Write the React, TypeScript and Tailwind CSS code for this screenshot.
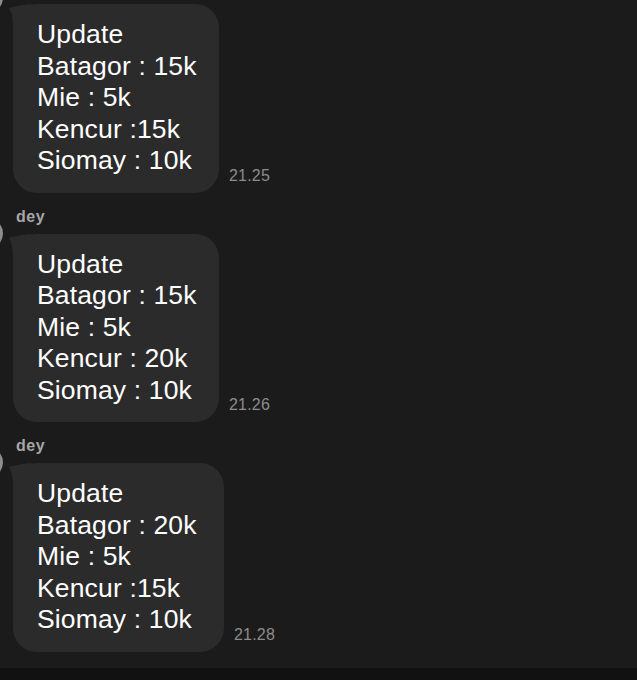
import React from 'react';

interface Message {
  sender?: string;
  lines: string[];
  time: string;
  width: string;
}

const messages: Message[] = [
  {
    lines: ['Update', 'Batagor : 15k', 'Mie : 5k', 'Kencur :15k', 'Siomay : 10k'],
    time: '21.25',
    width: 'w-[206px]',
  },
  {
    sender: 'dey',
    lines: ['Update', 'Batagor : 15k', 'Mie : 5k', 'Kencur : 20k', 'Siomay : 10k'],
    time: '21.26',
    width: 'w-[206px]',
  },
  {
    sender: 'dey',
    lines: ['Update', 'Batagor : 20k', 'Mie : 5k', 'Kencur :15k', 'Siomay : 10k'],
    time: '21.28',
    width: 'w-[211px]',
  },
];

const Tail = () => (
  <svg
    className="absolute -left-[6px] top-0"
    width="26"
    height="24"
    viewBox="0 0 26 24"
    aria-hidden
  >
    <path d="M2 4 Q 11 1 24 0 L 24 22 L 6 22 Q 6 11 2 4 Z" fill="#2b2b2b" />
  </svg>
);

const Bubble: React.FC<{ msg: Message; first?: boolean }> = ({ msg, first }) => (
  <div className={first ? 'relative' : 'relative mt-[14px]'}>
    {/* avatar peeking in from the left edge */}
    <div
      className={
        first
          ? 'absolute -left-[28px] -top-[22px] w-[31px] h-[31px] rounded-full bg-[#8d8d8d]'
          : 'absolute -left-[28px] top-[11px] w-[31px] h-[31px] rounded-full bg-[#8d8d8d]'
      }
    />
    {msg.sender && (
      <div className="pl-[16px] h-[20px] text-[16px] leading-[20px] tracking-[0.6px] font-bold text-[#a6a6a6] mb-[7px]">
        {msg.sender}
      </div>
    )}
    <div className="flex items-end pl-[13px]">
      <div
        className={`relative ${msg.width} rounded-[24px] bg-[#2b2b2b] pl-[24px] pt-[15px] pb-[16px] text-[26.5px] leading-[31.5px] tracking-[0.15px] text-white`}
      >
        <Tail />
        {msg.lines.map((l, i) => (
          <div key={i} className="relative whitespace-nowrap">
            {l}
          </div>
        ))}
      </div>
      <span className="ml-[10px] mb-[7px] text-[16px] leading-[20px] tracking-[0.2px] text-[#8c8c8c]">
        {msg.time}
      </span>
    </div>
  </div>
);

export default function App() {
  return (
    <div
      className="h-[680px] w-full flex flex-col bg-[#1b1b1b] overflow-hidden"
      style={{ fontFamily: '"Liberation Sans", Arial, sans-serif' }}
    >
      <div className="flex-1 pt-[4px]">
        {messages.map((m, i) => (
          <Bubble key={i} msg={m} first={i === 0} />
        ))}
      </div>
      <div className="h-[12px] bg-[#111111]" />
    </div>
  );
}
